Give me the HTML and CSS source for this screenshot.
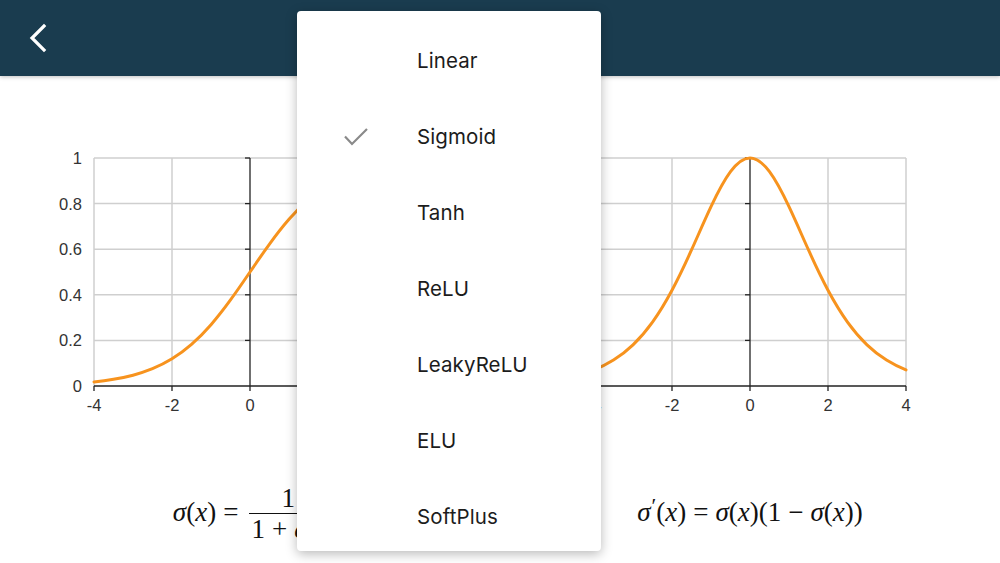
FILE: index.html
```html
<!DOCTYPE html>
<html>
<head>
<meta charset="utf-8">
<link rel="stylesheet" href="styles.css">
</head>
<body>
<header class="topbar">
  <button class="back" aria-label="Back">
    <svg width="24" height="32" viewBox="0 0 24 32"><path d="M17 4 L5 16 L17 28" fill="none" stroke="#fff" stroke-width="3.2" stroke-linecap="square"/></svg>
  </button>
</header>

<main class="panels">
  <section class="panel">
    <svg class="chart" width="500" height="280" viewBox="0 0 500 280">
      <g class="grid">
        <line x1="94" y1="18" x2="406" y2="18"/>
        <line x1="94" y1="63.6" x2="406" y2="63.6"/>
        <line x1="94" y1="109.2" x2="406" y2="109.2"/>
        <line x1="94" y1="154.8" x2="406" y2="154.8"/>
        <line x1="94" y1="200.4" x2="406" y2="200.4"/>
        <line x1="94" y1="18" x2="94" y2="246"/>
        <line x1="172" y1="18" x2="172" y2="246"/>
        <line x1="328" y1="18" x2="328" y2="246"/>
        <line x1="406" y1="18" x2="406" y2="246"/>
      </g>
      <g class="axis">
        <line x1="250" y1="18" x2="250" y2="246"/>
        <line x1="94" y1="246" x2="406" y2="246"/>
        <line x1="245" y1="18" x2="250" y2="18"/>
        <line x1="245" y1="63.6" x2="250" y2="63.6"/>
        <line x1="245" y1="109.2" x2="250" y2="109.2"/>
        <line x1="245" y1="154.8" x2="250" y2="154.8"/>
        <line x1="245" y1="200.4" x2="250" y2="200.4"/>
        <line x1="94" y1="246" x2="94" y2="251"/>
        <line x1="172" y1="246" x2="172" y2="251"/>
        <line x1="250" y1="246" x2="250" y2="251"/>
        <line x1="328" y1="246" x2="328" y2="251"/>
        <line x1="406" y1="246" x2="406" y2="251"/>
      </g>
      <g class="ylabels">
        <text x="82" y="24">1</text>
        <text x="82" y="69.6">0.8</text>
        <text x="82" y="115.2">0.6</text>
        <text x="82" y="160.8">0.4</text>
        <text x="82" y="206.4">0.2</text>
        <text x="82" y="252">0</text>
      </g>
      <g class="xlabels">
        <text x="94" y="271">-4</text>
        <text x="172" y="271">-2</text>
        <text x="250" y="271">0</text>
        <text x="328" y="271">2</text>
        <text x="406" y="271">4</text>
      </g>
      <path class="curve" d="M94,241.90 C100.5,241.23 107,240.40 113.5,239.32 C120,238.24 126.5,236.91 133,235.19 C139.5,233.47 146,231.36 152.5,228.70 C159,226.04 165.5,222.81 172,218.82 C178.5,214.83 185,210.08 191.5,204.41 C198,198.74 204.5,192.15 211,184.68 C217.5,177.21 224,168.85 230.5,159.92 C237,150.99 243.5,141.50 250,132 C256.5,122.50 263,113.01 269.5,104.08 C276,95.15 282.5,86.79 289,79.32 C295.5,71.85 302,65.26 308.5,59.59 C315,53.92 321.5,49.17 328,45.18 C334.5,41.19 341,37.96 347.5,35.30 C354,32.64 360.5,30.53 367,28.81 C373.5,27.09 380,25.76 386.5,24.68 C393,23.60 399.5,22.77 406,22.10"/>
    </svg>
    <div class="formula">
      <span class="var">σ</span><span class="rm">(</span><span class="var">x</span><span class="rm">)</span><span class="rm op">=</span><span class="frac"><span class="num">1</span><span class="den">1<span class="op">+</span><span class="var">e</span><sup class="sup">−<span class="var">x</span></sup></span></span>
    </div>
  </section>

  <section class="panel">
    <svg class="chart" width="500" height="280" viewBox="0 0 500 280">
      <g class="grid">
        <line x1="94" y1="18" x2="406" y2="18"/>
        <line x1="94" y1="63.6" x2="406" y2="63.6"/>
        <line x1="94" y1="109.2" x2="406" y2="109.2"/>
        <line x1="94" y1="154.8" x2="406" y2="154.8"/>
        <line x1="94" y1="200.4" x2="406" y2="200.4"/>
        <line x1="94" y1="18" x2="94" y2="246"/>
        <line x1="172" y1="18" x2="172" y2="246"/>
        <line x1="328" y1="18" x2="328" y2="246"/>
        <line x1="406" y1="18" x2="406" y2="246"/>
      </g>
      <g class="axis">
        <line x1="250" y1="18" x2="250" y2="246"/>
        <line x1="94" y1="246" x2="406" y2="246"/>
        <line x1="245" y1="18" x2="250" y2="18"/>
        <line x1="245" y1="63.6" x2="250" y2="63.6"/>
        <line x1="245" y1="109.2" x2="250" y2="109.2"/>
        <line x1="245" y1="154.8" x2="250" y2="154.8"/>
        <line x1="245" y1="200.4" x2="250" y2="200.4"/>
        <line x1="94" y1="246" x2="94" y2="251"/>
        <line x1="172" y1="246" x2="172" y2="251"/>
        <line x1="250" y1="246" x2="250" y2="251"/>
        <line x1="328" y1="246" x2="328" y2="251"/>
        <line x1="406" y1="246" x2="406" y2="251"/>
      </g>
      <g class="ylabels">
        <text x="82" y="24">0.25</text>
        <text x="82" y="69.6">0.2</text>
        <text x="82" y="115.2">0.15</text>
        <text x="82" y="160.8">0.1</text>
        <text x="82" y="206.4">0.05</text>
        <text x="82" y="252">0</text>
      </g>
      <g class="xlabels">
        <text x="94" y="271">-4</text>
        <text x="172" y="271">-2</text>
        <text x="250" y="271">0</text>
        <text x="328" y="271">2</text>
        <text x="406" y="271">4</text>
      </g>
      <path class="curve" d="M94,229.89 C100.5,227.30 107,224.12 113.5,220.05 C120,215.98 126.5,211.02 133,204.80 C139.5,198.58 146,191.11 152.5,182.07 C159,173.03 165.5,162.40 172,150.25 C178.5,138.10 185,124.38 191.5,109.98 C198,95.58 204.5,80.50 211,66.69 C217.5,52.88 224,40.43 230.5,31.68 C237,22.93 243.5,18 250,18 C256.5,18 263,22.93 269.5,31.68 C276,40.43 282.5,52.88 289,66.69 C295.5,80.50 302,95.58 308.5,109.98 C315,124.38 321.5,138.10 328,150.25 C334.5,162.40 341,173.03 347.5,182.07 C354,191.11 360.5,198.58 367,204.80 C373.5,211.02 380,215.98 386.5,220.05 C393,224.12 399.5,227.30 406,229.89"/>
    </svg>
    <div class="formula">
      <span class="var">σ</span><span class="rm prime">′</span><span class="rm">(</span><span class="var">x</span><span class="rm">)</span><span class="rm op">=</span><span class="var">σ</span><span class="rm">(</span><span class="var">x</span><span class="rm">)(1</span><span class="rm op">−</span><span class="var">σ</span><span class="rm">(</span><span class="var">x</span><span class="rm">))</span>
    </div>
  </section>
</main>

<ul class="menu">
  <li class="item"><span class="check"></span><span class="label">Linear</span></li>
  <li class="item selected"><span class="check"><svg width="26" height="20" viewBox="0 0 26 20"><path d="M2 9.5 L9 17 L24 2" fill="none" stroke="#8a8a8a" stroke-width="2.2"/></svg></span><span class="label">Sigmoid</span></li>
  <li class="item"><span class="check"></span><span class="label">Tanh</span></li>
  <li class="item"><span class="check"></span><span class="label">ReLU</span></li>
  <li class="item"><span class="check"></span><span class="label">LeakyReLU</span></li>
  <li class="item"><span class="check"></span><span class="label">ELU</span></li>
  <li class="item"><span class="check"></span><span class="label">SoftPlus</span></li>
</ul>
</body>
</html>
```

FILE: styles.css
```css
html, body {
  margin: 0;
  padding: 0;
}
body {
  width: 1000px;
  height: 563px;
  overflow: hidden;
  background: #fff;
  font-family: Inter, "Noto Sans", sans-serif;
  position: relative;
}
.topbar {
  height: 76px;
  background: #1a3c4f;
  box-shadow: 0 1px 4px rgba(0,0,0,0.25);
  display: flex;
  align-items: center;
  padding-left: 27px;
  position: relative;
  z-index: 1;
}
.back {
  background: none;
  border: 0;
  padding: 0;
  margin: 0;
  display: flex;
}
.panels {
  display: grid;
  grid-template-columns: 500px 500px;
}
.panel {
  display: flex;
  flex-direction: column;
  align-items: center;
}
.chart {
  display: block;
  margin-top: 64px;
}
.grid line {
  stroke: #cfcfcf;
  stroke-width: 1.5;
}
.axis line {
  stroke: #222;
  stroke-width: 1.3;
}
.ylabels text {
  font-family: "Liberation Sans", Arial, sans-serif;
  font-size: 16.5px;
  fill: #333;
  text-anchor: end;
}
.xlabels text {
  font-family: "Liberation Sans", Arial, sans-serif;
  font-size: 16.5px;
  fill: #333;
  text-anchor: middle;
}
.curve {
  fill: none;
  stroke: #f7931e;
  stroke-width: 3;
  stroke-linecap: round;
}
.formula {
  margin-top: 62px;
  height: 60px;
  font-family: "Liberation Serif", "Times New Roman", serif;
  font-size: 27px;
  color: #111;
  white-space: nowrap;
  display: flex;
  align-items: center;
}
.var {
  font-style: italic;
}
.rm {
  font-style: normal;
}
.op {
  padding: 0 7px;
}
.prime {
  font-size: 0.8em;
  position: relative;
  top: -6px;
  margin-left: 1px;
}
.frac {
  display: inline-flex;
  flex-direction: column;
  align-items: center;
  margin-left: 4px;
  margin-top: 6px;
}
.num {
  line-height: 26px;
  padding: 0 2px 2px;
  border-bottom: 1.3px solid #111;
  align-self: stretch;
  text-align: center;
}
.den {
  line-height: 26px;
  padding: 2px 2px 0;
}
.sup {
  font-size: 0.7em;
  vertical-align: 0;
  position: relative;
  top: -10px;
}
.menu {
  position: absolute;
  left: 297px;
  top: 11px;
  width: 304px;
  height: 540px;
  margin: 0;
  padding: 12px 0 0;
  box-sizing: border-box;
  list-style: none;
  background: #fff;
  border-radius: 4px;
  box-shadow: 0 3px 12px rgba(0,0,0,0.28);
  z-index: 2;
  overflow: hidden;
}
.item {
  height: 76px;
  display: flex;
  align-items: center;
}
.check {
  width: 120px;
  padding-left: 46px;
  box-sizing: border-box;
  display: flex;
  align-items: center;
  height: 20px;
  margin-top: -1px;
}
.label {
  font-size: 20.5px;
  line-height: 76px;
  color: #1c1c1c;
  letter-spacing: 0.1px;
}
```
